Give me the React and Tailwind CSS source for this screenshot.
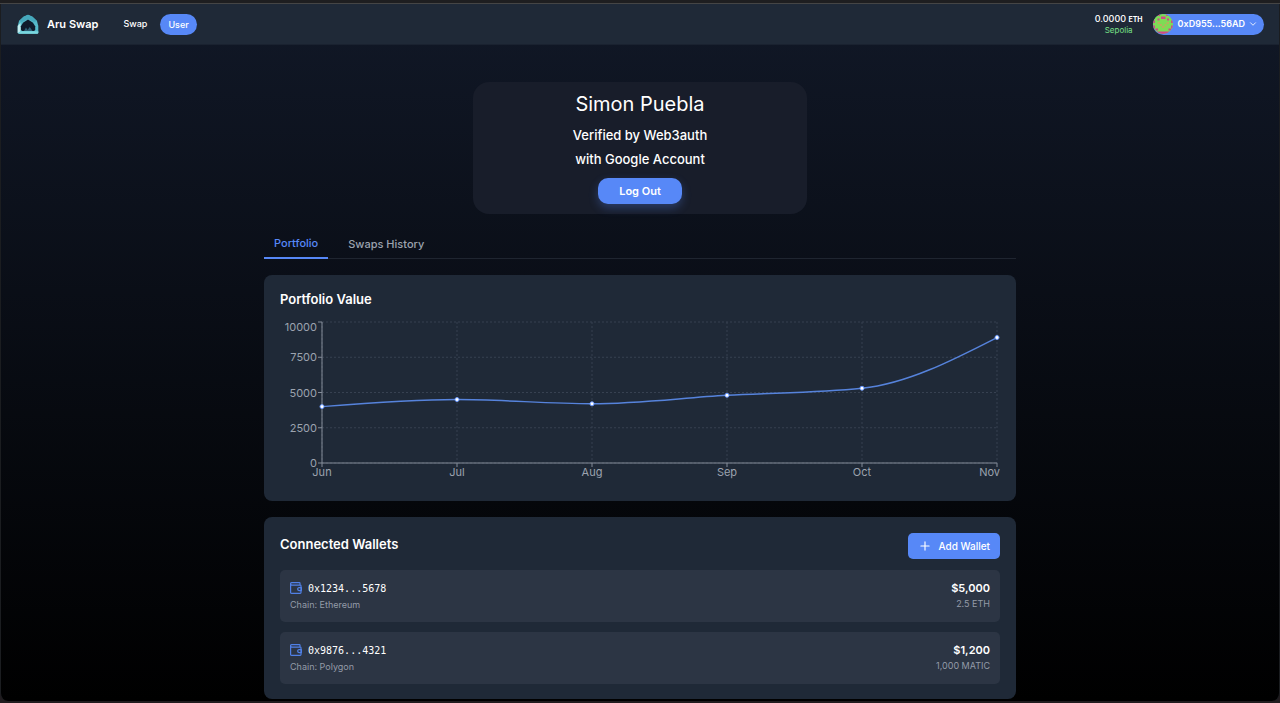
import React from "react";
import { Plus, ChevronDown } from "lucide-react";

const history = [
  { month: "Jun", value: 4000 },
  { month: "Jul", value: 4500 },
  { month: "Aug", value: 4200 },
  { month: "Sep", value: 4800 },
  { month: "Oct", value: 5300 },
  { month: "Nov", value: 8900 },
];

const wallets = [
  { address: "0x1234...5678", chain: "Ethereum", value: "$5,000", amount: "2.5 ETH" },
  { address: "0x9876...4321", chain: "Polygon", value: "$1,200", amount: "1,000 MATIC" },
];

function Logo() {
  return (
    <svg viewBox="0 0 22 20" className="h-5 w-[22px]" aria-hidden="true">
      <path d="M11 0.8 L15.5 2.8 L20 7 L21.3 12 V19 L20.5 19.8 H1.5 L0.7 19 V12 L2 7 L6.5 2.8 Z" fill="#56b9ca" />
      <path d="M0.7 12 L3.5 9 L3.8 15.5 L3 18 L0.7 19 Z" fill="#c4eef0" />
      <path d="M11 0.8 L6.5 2.8 L2 7 L5 8 L11 5 L17 8 L20 7 L15.5 2.8 Z" fill="#46a8bc" />
      <path d="M3 17.2 H21.3 V19 L20.5 19.8 H1.5 Z" fill="#7ad6de" />
      <path d="M11 5.4 L16 8.8 L18.2 12.2 V15.8 L17.2 17 H5 L3.9 15.8 V12.2 L6 8.8 Z" fill="#101a2b" />
      <path d="M7 17 L9 13.5 L10.5 16 L12.8 13 L15.5 17 Z" fill="#2f6076" />
    </svg>
  );
}

function Avatar() {
  return (
    <svg viewBox="0 0 20 20" className="h-5 w-5 rounded-full" aria-hidden="true">
      <rect width="20" height="20" fill="#7ddc55" />
      <g fill="#d1488a">
        <rect x="4" y="0" width="3" height="2" />
        <rect x="13" y="0" width="3" height="2" />
        <rect x="8" y="2.5" width="4.5" height="2.5" />
        <rect x="4.5" y="4.5" width="2" height="2" />
        <rect x="14" y="4.5" width="2" height="2" />
        <rect x="0" y="6.5" width="2" height="2.5" />
        <rect x="18" y="6.5" width="2" height="2.5" />
        <rect x="0" y="11.5" width="2" height="3" />
        <rect x="18" y="11.5" width="2" height="3" />
        <rect x="2.5" y="14.5" width="2.5" height="2" />
        <rect x="15.5" y="14.5" width="2.5" height="2" />
        <rect x="4" y="17.5" width="12" height="2.5" />
      </g>
      <g fill="#b6b35c">
        <rect x="4.5" y="8" width="2.5" height="2" />
        <rect x="13.5" y="8" width="2.5" height="2" />
        <rect x="7" y="10" width="2" height="2" />
        <rect x="11.5" y="10" width="2" height="2" />
        <rect x="9" y="12" width="2.5" height="2" />
      </g>
    </svg>
  );
}

function WalletIcon() {
  return (
    <svg viewBox="0 0 12 12" className="h-3 w-3" fill="none" stroke="#5080e6" strokeWidth="1.2" strokeLinejoin="round" aria-hidden="true">
      <path d="M10 3.2 V1.2 Q10 0.6 9.4 0.6 H1.6 Q0.6 0.6 0.6 1.8 T1.8 3.2 H10.4 Q11 3.2 11 3.8 V10.6 Q11 11.4 10.2 11.4 H1.6 Q0.6 11.4 0.6 10.4 V1.8" />
      <path d="M11.4 5.6 H9 Q7.6 5.8 7.6 7.1 T9 8.6 H11.4 Z" />
    </svg>
  );
}

const plot = { left: 42, right: 717, top: 6, bottom: 147 };

function monotonePath(pts) {
  const n = pts.length;
  const slope = pts.slice(1).map((p, i) => (p.y - pts[i].y) / (p.x - pts[i].x));
  const m = new Array(n).fill(0);
  for (let i = 1; i < n - 1; i++) {
    const a = slope[i - 1];
    const b = slope[i];
    m[i] = a * b <= 0 ? 0 : Math.sign(a) * Math.min(Math.abs(a), Math.abs(b), Math.abs(a + b) / 4) * 2;
  }
  m[0] = (3 * slope[0] - m[1]) / 2;
  m[n - 1] = (3 * slope[n - 2] - m[n - 2]) / 2;
  let d = `M${pts[0].x},${pts[0].y}`;
  for (let i = 1; i < n; i++) {
    const h = (pts[i].x - pts[i - 1].x) / 3;
    d += `C${pts[i - 1].x + h},${pts[i - 1].y + h * m[i - 1]},${pts[i].x - h},${pts[i].y - h * m[i]},${pts[i].x},${pts[i].y}`;
  }
  return d;
}

function PortfolioChart() {
  const { left, right, top, bottom } = plot;
  const yOf = (v) => bottom - ((bottom - top) * v) / 10000;
  const pts = history.map((p, i) => ({
    ...p,
    x: left + ((right - left) * i) / (history.length - 1),
    y: yOf(p.value),
  }));
  const ticks = [0, 2500, 5000, 7500, 10000];
  return (
    <svg viewBox="0 0 720 170" className="block w-full" role="img" aria-label="Portfolio value by month">
      <g stroke="#374151" strokeDasharray="2 2">
        {ticks.map((t) => (
          <line key={t} x1={left} x2={right} y1={yOf(t)} y2={yOf(t)} />
        ))}
        {pts.map((p) => (
          <line key={p.month} x1={p.x} x2={p.x} y1={top} y2={bottom} />
        ))}
      </g>
      <g stroke="#848c99">
        <line x1={left} x2={left} y1={top} y2={bottom} />
        <line x1={left} x2={right} y1={bottom} y2={bottom} />
        {ticks.map((t) => (
          <line key={t} x1={left - 4} x2={left} y1={yOf(t)} y2={yOf(t)} />
        ))}
        {pts.map((p) => (
          <line key={p.month} x1={p.x} x2={p.x} y1={bottom} y2={bottom + 4} />
        ))}
      </g>
      <g fill="#9ca3af" className="text-[11px]">
        {ticks.map((t) => (
          <text key={t} x={left - 5} y={t === 10000 ? 15 : yOf(t) + 4} textAnchor="end">{t}</text>
        ))}
        {pts.map((p, i) => (
          <text key={p.month} x={i === pts.length - 1 ? 720 : p.x} y={160} textAnchor={i === pts.length - 1 ? "end" : "middle"}>{p.month}</text>
        ))}
      </g>
      <path d={monotonePath(pts)} fill="none" stroke="#5683dc" strokeWidth="1.4" />
      {pts.map((p) => (
        <circle key={p.month} cx={p.x} cy={p.y} r="2" fill="#ffffff" stroke="#6d9bff" strokeWidth="1" />
      ))}
    </svg>
  );
}

function WalletRow({ address, chain, value, amount }) {
  return (
    <li className="flex min-h-[52px] items-start justify-between rounded-[5px] bg-[#2c3544] px-[10px] py-2">
      <div>
        <div className="flex h-5 items-center gap-[6px]">
          <WalletIcon />
          <span className="font-['DejaVu_Sans_Mono',monospace] text-[10px] text-white">{address}</span>
        </div>
        <p className="text-[9px] leading-[14px] text-[#949ba8]">Chain: {chain}</p>
      </div>
      <div className="text-right">
        <p className="text-[11px] leading-5 font-semibold text-white">{value}</p>
        <p className="text-[9px] leading-3 text-[#949ba8]">{amount}</p>
      </div>
    </li>
  );
}

export default function App() {
  return (
    <div className="flex min-h-screen flex-col bg-[#211c1f] pb-[2px] font-['Inter',sans-serif] text-white">
      <div className="h-1 border-b border-[#454545] bg-[#1e1e20]" />
      <div className="flex grow flex-col rounded-b-lg border-x border-[#1b1d20] bg-linear-to-b/srgb from-[#111827] to-black">
        <header className="flex h-[41px] items-center justify-between border-b border-[#1a2230] bg-[#1f2937] pr-[15px] pl-4">
          <div className="flex items-center">
            <a href="#home" className="flex items-center gap-2 text-[11px] font-semibold">
              <Logo />
              Aru Swap
            </a>
            <nav className="ml-[17px] flex items-center gap-[5px] text-[9px] font-medium">
              <a href="#swap" className="rounded-full px-2 py-1">Swap</a>
              <a href="#user" className="rounded-full bg-[#5788f7] px-2 py-1 leading-[13px]">User</a>
            </nav>
          </div>
          <div className="flex items-center gap-[10px]">
            <div className="text-center">
              <p className="text-[9px] leading-[10px] font-medium">
                0.0000 <span className="text-[7px] font-bold">ETH</span>
              </p>
              <p className="text-[8px] leading-[10px] text-[#78e087]">Sepolia</p>
            </div>
            <button type="button" className="flex h-[21px] items-center rounded-full bg-[#5788f7] pr-[6px] text-[9px] font-semibold">
              <Avatar />
              <span className="mr-[3px] ml-[5px]">0xD955...56AD</span>
              <ChevronDown size={10} strokeWidth={2} />
            </button>
          </div>
        </header>

        <main className="mx-auto w-full max-w-[752px] pt-[37px]">
          <section className="mx-auto flex w-full max-w-[334px] flex-col items-center rounded-2xl bg-[#181d2a] pt-2 pb-[10px]">
            <h1 className="text-[20px] leading-7">Simon Puebla</h1>
            <p className="mt-[5px] text-[13px] leading-6 font-medium">Verified by Web3auth</p>
            <p className="text-[13px] leading-6 font-medium">with Google Account</p>
            <button type="button" className="mt-[7px] h-[26px] rounded-[10px] bg-[#5788f7] px-[21px] text-[11px] font-semibold shadow-[0_4px_10px_rgba(87,136,247,0.3)]">
              Log Out
            </button>
          </section>

          <div role="tablist" className="mt-4 flex h-[29px] gap-[10px] border-b border-[#1f2530] text-[11px] font-medium">
            <button type="button" role="tab" aria-selected="true" className="-mb-px border-b-2 border-[#5788f7] px-[10px] text-[#5788f7]">
              Portfolio
            </button>
            <button type="button" role="tab" aria-selected="false" className="px-[10px] text-[#9ca3af]">
              Swaps History
            </button>
          </div>

          <section className="mt-4 rounded-lg bg-[#1f2937] px-4 py-[15px]">
            <h2 className="mb-2 text-[13px] leading-[18px] font-semibold">Portfolio Value</h2>
            <PortfolioChart />
          </section>

          <section className="mt-4 rounded-lg bg-[#1f2937] p-4 pb-[15px]">
            <div className="mb-[11px] flex items-start justify-between">
              <h2 className="text-[13px] leading-[22px] font-semibold">Connected Wallets</h2>
              <button type="button" className="flex h-[26px] items-center gap-[6px] rounded-[5px] bg-[#5788f7] px-[10px] text-[10px] font-medium">
                <Plus size={14} strokeWidth={2} />
                Add Wallet
              </button>
            </div>
            <ul className="flex flex-col gap-[10px]">
              {wallets.map((w) => (
                <WalletRow key={w.address} {...w} />
              ))}
            </ul>
          </section>
        </main>
      </div>
    </div>
  );
}
